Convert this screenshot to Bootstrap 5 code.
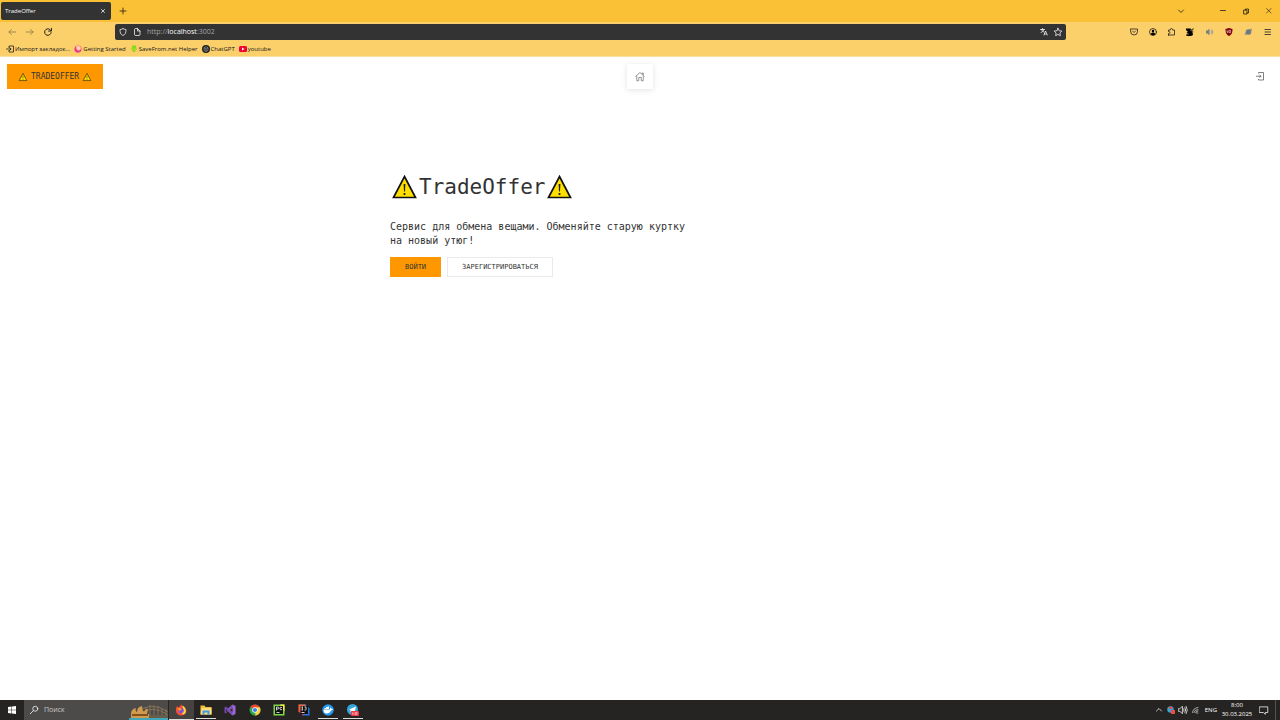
<!DOCTYPE html>
<html lang="ru">
<head>
<meta charset="utf-8">
<meta name="viewport" content="width=device-width, initial-scale=1">
<title>TradeOffer</title>
<link href="https://cdn.jsdelivr.net/npm/bootstrap@5.3.0/dist/css/bootstrap.min.css" rel="stylesheet">
<style>
  body { font: 6px/8px "Open Sans", "Noto Sans", sans-serif; color: #15141a; background: #fff; }
  svg { display: block; flex: none; }
  button { border: 0; background: none; padding: 0; color: inherit; display: flex; align-items: center; justify-content: center; }
  .i8 { width: 8px; height: 8px; }
  .i10 { width: 10px; height: 10px; }
  .i12 { width: 12px; height: 12px; }
  .line { fill: none; stroke: currentColor; stroke-width: 1.5; stroke-linecap: round; stroke-linejoin: round; }
  .thin { stroke-width: 1.2; }

  .tabstrip { height: 22px; background: #fbc136; }
  .browser-tab { width: 110px; height: 18px; margin-left: 1px; padding: 0 4px; background: #333; color: #fbfbfe; border-radius: 2px; }
  .win { width: 23px; height: 22px; }
  .tabs-menu { width: 18px; margin-right: 21px; }
  .toolbar { height: 20px; background: #fbd06a; padding: 0 4px 0 3px; }
  .nav-tool { width: 18px; height: 18px; }
  .ext-tool { width: 19px; height: 18px; }
  .faded { opacity: .4; }
  .address { margin: 0 58px; height: 16px; padding: 0 3px 0 4px; gap: 5px; background: #333; color: #fbfbfe; border-radius: 2px; }
  .url { font-size: 7px; line-height: 10px; color: #a3a3a6; }
  .url b { color: #fbfbfe; font-weight: 400; }
  .bookmarks { height: 15px; background: #fbd06a; padding: 0 6px; gap: 4px; border-bottom: 1px solid #fbe0a2; }
  .bookmarks a { color: #15141a; text-decoration: none; gap: 1px; }

  .mono { font-family: "DejaVu Sans Mono", "Liberation Mono", monospace; color: #333; }
  .app-nav { padding: 7px 7px 0; }
  .app-btn { border-radius: 0; border: 1px solid #e8eaed; text-transform: uppercase; font-size: 7px; line-height: 18px; padding: 0 14px; display: block; color: #333; }
  .orange, .orange:hover { background: #ff9800; border-color: #ff9800; color: #333; }
  .brand { display: flex; align-items: center; gap: 3px; font-size: 8px; line-height: 23px; padding: 0 10px; }
  .home { width: 26px; height: 25px; background: #fff; color: #777; box-shadow: 0 1px 6px rgba(0,0,0,.12); }
  .logout { width: 26px; height: 25px; color: #555; }
  .hero { width: 500px; max-width: 100%; margin: 82px auto 0; }
  .hero h1 { font-size: 21px; line-height: 32px; margin: 0 0 17px; font-weight: 400; }
  .sign { width: 29px; height: 26px; }
  .hero p { width: 300px; font-size: 10px; line-height: 14px; margin: 0 0 9px; }
  .actions { gap: 6px; }

  .taskbar { height: 20px; background: #262422; color: #fff; }
  .start { width: 24px; height: 20px; }
  .search { width: 144px; height: 20px; background: #4d4b49; padding-left: 5px; gap: 5px; }
  .search input { width: 88px; border: 0; padding: 0; background: none; font-size: 7px; line-height: 10px; color: #c8c8c8; }
  .search input::placeholder { color: #c8c8c8; }
  .bridge { left: 129px; }
  .apps { width: 196px; margin-left: 1px; }
  .apps button { flex: 1 1 0; height: 20px; border-bottom: 1px solid transparent; }
  .apps .open { background: linear-gradient(#ddd, #ddd) bottom / 20px 1px no-repeat; }
  .apps .current { background: #45423f; border-color: #ddd; }
  .tray { width: 12px; height: 20px; }
  .clock { width: 40px; text-align: center; line-height: 9px; }
  .notify { width: 14px; height: 20px; }
  .desk { width: 9px; height: 20px; border: 0; }
  .desk::before { content: ""; height: 20px; border-left: 1px solid #55524f; }
</style>
</head>
<body class="d-flex flex-column min-vh-100">
<svg width="0" height="0" class="position-absolute" aria-hidden="true">
  <symbol id="warning" viewBox="0 0 29 26"><path d="M14.500 2.500 25.500 23.500H3.500z" fill="#ffdf00" stroke="#111" stroke-width="1.700"/><path d="M13.600 10h1.800l-.4 7.500h-1zM13.600 19h1.800v2h-1.800z" fill="#222"/></symbol>
</svg>

<header>
  <div class="tabstrip d-flex align-items-center">
    <div class="browser-tab d-flex align-items-center justify-content-between">
      <span>TradeOffer</span>
      <button aria-label="Закрыть вкладку"><svg class="i8 line" viewBox="0 0 16 16"><path d="m5 5 6 6m0-6-6 6"/></svg></button>
    </div>
    <button class="win" aria-label="Новая вкладка"><svg class="i8 line" viewBox="0 0 16 16"><path d="M8 2v12M2 8h12"/></svg></button>
    <button class="win tabs-menu ms-auto" aria-label="Список вкладок"><svg class="i8 line" viewBox="0 0 16 16"><path d="m3 6 5 5 5-5"/></svg></button>
    <button class="win" aria-label="Свернуть"><svg class="i8 line" viewBox="0 0 16 16"><path d="M3 7h10"/></svg></button>
    <button class="win" aria-label="Восстановить"><svg class="i8 line" viewBox="0 0 16 16"><path d="M4 6h6v8H4zM7 6V4h6v8h-3"/></svg></button>
    <button class="win" aria-label="Закрыть"><svg class="i8 line thin" viewBox="0 0 16 16"><path d="m3 3 9 9m0-9-9 9"/></svg></button>
  </div>

  <div class="toolbar d-flex align-items-center">
    <button class="nav-tool faded" aria-label="Назад"><svg class="i10 line" viewBox="0 0 16 16"><path d="M14 8H3m4-4L3 8l4 4"/></svg></button>
    <button class="nav-tool faded" aria-label="Вперёд"><svg class="i10 line" viewBox="0 0 16 16"><path d="M2 8h11M9 4l4 4-4 4"/></svg></button>
    <button class="nav-tool" aria-label="Обновить"><svg class="i10 line" viewBox="0 0 16 16"><path d="M13 9a5.200 5.200 0 1 1-2-5l2 2M13.500 2v4.500H9"/></svg></button>
    <div class="address d-flex align-items-center flex-grow-1">
      <svg class="i8 line" viewBox="0 0 16 16"><path d="M8 1c2 1.500 4 2 6 2 0 6-1 10-6 12C3 13 2 9 2 3c2 0 4-.5 6-2z"/></svg>
      <svg class="line" width="10" height="8" viewBox="-2 0 20 16"><path d="M3 3q0-2 2-2h4l5 5v7q0 2-2 2H5q-2 0-2-2zM9 1v5h5"/></svg>
      <span class="url flex-grow-1">http://<b>localhost</b>:3002</span>
      <button aria-label="Перевести"><svg class="i8 line" viewBox="0 0 16 16"><path d="M1 3h8M5 1v2m3 0c-1 3-3 5-6 6m1-6c1 3 3 4 5 5m0 6 3-8 3.500 8M9 12h4"/></svg></button>
      <button aria-label="В закладки"><svg class="i10 line thin" viewBox="0 0 16 16"><path d="m8 2 1.900 4 4.300.5-3.200 3 .8 4.400L8 11.800l-3.800 2.100.8-4.400-3.200-3L6.100 6z"/></svg></button>
    </div>
    <button class="ext-tool" aria-label="Pocket"><svg class="i8 line" viewBox="0 0 16 16"><path d="M1 2h14v5a7 7 0 0 1-14 0zM5 6l3 3 3-3"/></svg></button>
    <button class="ext-tool" aria-label="Аккаунт"><svg class="i8" viewBox="0 0 16 16"><circle cx="8" cy="8" r="7" class="line"/><circle cx="8" cy="6" r="2.500"/><path d="M3.500 12.500C4 8 12 8 12.500 12.500 10 15 6 15 3.500 12.500z"/></svg></button>
    <button class="ext-tool" aria-label="Расширения"><svg class="i8 line" viewBox="0 0 16 16"><path d="M1 14v-3h1c2.500 0 2.500-4 0-4H1V4h4V3c0-3 4-3 4 0v1h4v10H1z"/></svg></button>
    <button class="ext-tool" aria-label="Редактор"><svg class="i10" viewBox="0 0 20 20"><path d="M0 3h9l2 2 5-3-2 4-4 1 5 1-2 2 1 6-4 2H2l-3-3 5-1-3-3 3-1-4-4z"/><path d="m8 7 8-4M1 15l5-1M11 8l5 3" fill="none" stroke="#c4a65d"/></svg></button>
    <button class="ext-tool" aria-label="Громкость"><svg class="i8" viewBox="0 0 16 16" fill="#777f87"><path d="M0 5h3l4-4v14l-4-4H0z"/><path d="M10 5q2 3 0 6m2-8q4 5 0 10" fill="none" stroke="#7890a2" stroke-width="1.500"/></svg></button>
    <button class="ext-tool" aria-label="uBlock"><svg class="i8" viewBox="0 0 16 16"><path d="m8 0 7 2c0 7-1 11-7 14C2 13 1 9 1 2z" fill="#800610"/><path d="M4 5v3q0 1 2 1V5m2 4V5h3v4z" fill="none" stroke="#fff"/></svg></button>
    <button class="ext-tool" aria-label="Прокси"><svg class="i8" viewBox="0 0 16 16"><circle cx="9" cy="8" r="5.500" fill="#687783"/><path d="M2 13C3 7 10 2 15 2c0 6-6 11-13 11" fill="none" stroke="#7d8788" stroke-width="1.500"/></svg></button>
    <button class="ext-tool" aria-label="Меню"><svg class="i8 line" viewBox="0 0 16 16"><path d="M4 3h11M4 8h11M4 13h11"/></svg></button>
  </div>

  <nav class="bookmarks d-flex align-items-center" aria-label="Закладки">
    <a href="#" class="d-flex align-items-center"><svg class="i8 line" viewBox="0 0 16 16"><path d="M6 5V2h9v12H6v-3M1 8h9M7 5l3 3-3 3"/></svg>Импорт закладок…</a>
    <a href="#" class="d-flex align-items-center"><svg class="i8" viewBox="0 0 16 16"><circle cx="8" cy="8" r="7" fill="#f5416c"/><path d="M5 2c7-2 11 4 7 8-5 3-9-2-7-8" fill="#ffd1b7"/><path d="M1 6c2 6 8 8 13 5-3 6-13 6-13-5" fill="#dd3caa"/></svg><span>Getting Started</span></a>
    <a href="#" class="d-flex align-items-center"><svg class="i8" viewBox="0 0 16 16"><path d="M4 1h8v6h3l-7 8-7-8h3z" fill="#8bd520"/><path d="m1 4 7 5 7-5-3 6H4z" fill="#b7df29"/></svg>SaveFrom.net Helper</a>
    <a href="#" class="d-flex align-items-center"><svg class="i8" viewBox="0 0 16 16"><circle cx="8" cy="8" r="8" fill="#20201e"/><path d="m8 3 4 2.500v5L8 13l-4-2.500v-5zM4 5.500l4 2.500 4-2.500M8 8v5" fill="none" stroke="#bbb"/></svg><span>ChatGPT</span></a>
    <a href="#" class="d-flex align-items-center"><svg class="i8" viewBox="0 0 16 16"><rect y="2" width="16" height="12" rx="3" fill="#f00033"/><path d="m6 5 5 3-5 3z" fill="#fff"/></svg>youtube</a>
  </nav>
</header>

<main class="mono flex-grow-1">
  <nav class="app-nav row g-0 align-items-center">
    <div class="col"><a href="#" class="app-btn orange brand d-inline-flex text-decoration-none"><svg class="i10" viewBox="0 0 29 26"><use href="#warning" width="29" height="26"/></svg><span>TradeOffer</span><svg class="i10" viewBox="0 0 29 26"><use href="#warning" width="29" height="26"/></svg></a></div>
    <div class="col-auto"><button class="home" aria-label="Главная"><svg class="i10" viewBox="0 0 20 20" fill="none" stroke="currentColor" stroke-width="1.500"><path d="m1 9 9-8 9 8M3.500 8v9.500h4V11h5v6.500h4V8M14 4V2h2.500v4"/></svg></button></div>
    <div class="col d-flex justify-content-end"><button class="logout" aria-label="Войти в аккаунт"><svg class="i10" viewBox="0 0 20 20" fill="none" stroke="currentColor" stroke-width="1.500"><path d="M7 3V1h10v15H7v-2M2 8.500h10M9 5.500l3 3-3 3"/></svg></button></div>
  </nav>
  <section class="hero">
    <h1 class="d-flex align-items-center"><svg class="sign"><use href="#warning"/></svg><span>TradeOffer</span><svg class="sign"><use href="#warning"/></svg></h1>
    <p>Сервис для обмена вещами. Обменяйте старую куртку на новый утюг!</p>
    <div class="actions d-flex">
      <button class="app-btn orange">Войти</button>
      <button class="app-btn">Зарегистрироваться</button>
    </div>
  </section>
</main>

<footer class="taskbar d-flex align-items-center">
  <button class="start" aria-label="Пуск"><svg class="i8" viewBox="0 0 16 16" fill="#fff"><path d="m0 2 7-1v6.500H0zM8 1l8-1v7.500H8zM0 8.500h7V15l-7-1zM8 8.500h8V16l-8-1z"/></svg></button>
  <label class="search d-flex align-items-center">
    <svg class="i10 line thin" viewBox="0 0 16 16"><circle cx="10" cy="6" r="4"/><path d="m7 9-5 5"/></svg>
    <input type="text" placeholder="Поиск" aria-label="Поиск">
    <svg class="bridge position-absolute" width="39" height="20" viewBox="0 0 39 20"><path d="M5 15Q21-1 39 12M10 14Q24 4 39 15M17 7v9m4-11v11m4-11v11m4-10v10m4-8v8m4-7v7" fill="none" stroke="#8f7a5c" stroke-width=".800"/><path d="M2 14q0-5 5-6-1 3 1 4 0-5 5-6 0 4 2 6 1-3 4-3l-1 5h2v5H2z" fill="#d49a4c"/><path d="M3 14h16v2H3z" fill="#81511f"/><path d="M20 15h19v3H20z" fill="#665d4e"/><path d="M0 18h39v2H0z" fill="#3ea9bd"/></svg>
  </label>
  <div class="apps d-flex">
    <button class="current" aria-label="Firefox"><svg class="i12" viewBox="0 0 24 24"><path d="M4 4l3 3c3-1 3-4 6-6 1 5 6 4 8 8 5 9-2 14-9 14S-2 15 4 4" fill="#ff4d35"/><path d="M15 3c7 4 9 12 4 17-5 3-8-3-3-7z" fill="#ffd43b"/><circle cx="12" cy="13" r="5.500" fill="#8150d9"/><path d="M5 9c4-3 7 0 9 2-4 0-3 3-6 3z" fill="#ff971b"/></svg></button>
    <button class="open" aria-label="Проводник"><svg class="i12" viewBox="0 0 24 24"><path d="M1 3h8l2 3h12v15H1z" fill="#f5bb3c"/><path d="M3 8h20v13H1z" fill="#ffdc7c"/><path d="M5 21v-8h14v8h-4v-4H9v4z" fill="#3e9bdd"/></svg></button>
    <button aria-label="Visual Studio"><svg class="i12" viewBox="0 0 24 24"><path d="m17 1 6 3v16l-6 3L5 12z" fill="#9b67d5"/><path d="m1 7 3-2 13 12v6L4 10v6l13-9V1L4 19l-3-2z" fill="#754ab1"/><path d="m17 8-5 4 5 4z" fill="#262422"/></svg></button>
    <button aria-label="Chrome"><svg class="i12" viewBox="0 0 24 24"><circle cx="12" cy="12" r="11" fill="#2aa84a"/><path d="M2.500 6.500A11 11 0 0 1 21.500 6.500L12 12z" fill="#ed4336"/><path d="M21.500 6.500A11 11 0 0 1 12 23l2-10-2-6.500z" fill="#fdd238"/><circle cx="12" cy="12" r="5.500" fill="#fff"/><circle cx="12" cy="12" r="4.200" fill="#3d7de8"/></svg></button>
    <button aria-label="PyCharm"><svg class="i12" viewBox="0 0 24 24"><path d="M1 1h22v22H1z" fill="#7fd74a"/><path d="M14 1h9v14z" fill="#f5ed48"/><path d="M4 4h16v16H4z" fill="#111"/><path d="M7 13V6h2q3 0 3 2t-3 2H7m11-3q-4-2-4 2t4 2M7 17h6" fill="none" stroke="#fff" stroke-width="1.600"/></svg></button>
    <button aria-label="IntelliJ IDEA"><svg class="i12" viewBox="0 0 24 24"><path d="M1 1h14l8 8v14H9z" fill="#2474e5"/><path d="m1 1 14 0-4 19-10-4z" fill="#f76a37"/><path d="m1 12 9 11 8-8z" fill="#ec3168"/><path d="M5 4h15v16H5z" fill="#111"/><path d="M7 6h3M8.500 6v6M7 12h3m3-6h3v5q0 2-3 1M7 17h6" fill="none" stroke="#fff" stroke-width="1.600"/></svg></button>
    <button class="open" aria-label="Docker"><svg class="i12" viewBox="0 0 24 24"><circle cx="12" cy="12" r="11.500" fill="#2496ed"/><path d="M3 11h13q0-3 1-4 2 1 2 3 2-1 3 1-2 2-4 2-2 6-9 6-6 0-6-8m2-1V8h3V6h3V5h3v5z" fill="#fff"/></svg></button>
    <button class="open" aria-label="Telegram"><svg class="i12" viewBox="0 0 24 24"><circle cx="11" cy="11" r="11" fill="#35a5dc"/><path d="m4 11 14-6-3 13-5-4-3 2v-4z" fill="#fff"/><rect x="8" y="14" width="16" height="10" rx="2" fill="#ef3944"/><path d="M11 17v4m3-4v4m3-4h3v4h-3z" fill="none" stroke="#fff"/></svg></button>
  </div>
  <button class="tray ms-auto" aria-label="Скрытые значки"><svg class="i8 line" viewBox="0 0 16 16"><path d="m3 10 5-5 5 5"/></svg></button>
  <button class="tray" aria-label="Обновления"><svg class="i8" viewBox="0 0 16 16"><circle cx="7" cy="7" r="6.500" fill="#2fa5dc"/><path d="M3 3q5-4 9 1L7 7zM8 8h8v8H8z" fill="#ed4c3e"/></svg></button>
  <button class="tray" aria-label="Звук"><svg class="i10 line thin" viewBox="0 0 16 16"><path d="M1 6h2l4-4v12l-4-4H1zM9 6q2 2 0 4m2-6q3 4 0 8m2-10q4 6 0 12"/></svg></button>
  <button class="tray" aria-label="Сеть"><svg class="i8 line thin" viewBox="0 0 16 16"><path d="M3 13Q4 4 14 3M6 13q1-6 8-6m-5 6q1-3 5-3m-3 4h3"/></svg></button>
  <button class="ms-1" aria-label="Язык ввода">ENG</button>
  <div class="clock">8:00<br>30.03.2025</div>
  <button class="notify" aria-label="Уведомления"><svg class="i10 line thin" viewBox="0 0 16 16"><path d="M1 3h13v9h-4v3l-3-3H1z"/></svg></button>
  <button class="desk" aria-label="Показать рабочий стол"></button>
</footer>
<script src="https://cdn.jsdelivr.net/npm/bootstrap@5.3.0/dist/js/bootstrap.bundle.min.js"></script>
</body>
</html>
